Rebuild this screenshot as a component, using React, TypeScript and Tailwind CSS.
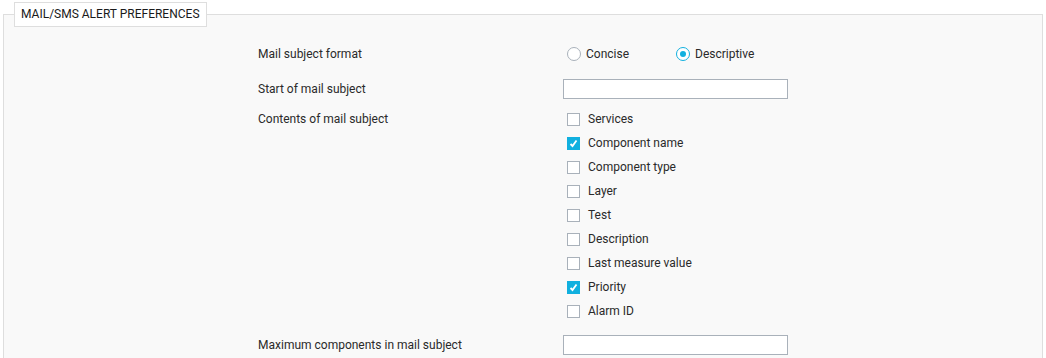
import React from "react";

const items = [
  { label: "Services", checked: false },
  { label: "Component name", checked: true },
  { label: "Component type", checked: false },
  { label: "Layer", checked: false },
  { label: "Test", checked: false },
  { label: "Description", checked: false },
  { label: "Last measure value", checked: false },
  { label: "Priority", checked: true },
  { label: "Alarm ID", checked: false },
];

function Radio({ on, label }: { on?: boolean; label: string }) {
  return (
    <label className="flex items-center gap-[5px]">
      <span
        className={
          "flex h-[14px] w-[14px] items-center justify-center rounded-full border bg-white " +
          (on ? "border-[#11b0df]" : "border-[#a9b1ba]")
        }
      >
        {on && <span className="h-[6px] w-[6px] rounded-full bg-[#11b0df]" />}
      </span>
      {label}
    </label>
  );
}

function Check({ on, label }: { on: boolean; label: string }) {
  return (
    <label className="flex h-[24px] items-center gap-[8px] pl-[4px]">
      {on ? (
        <span className="flex h-[13px] w-[13px] items-center justify-center bg-[#11b0df]">
          <svg width="9" height="9" viewBox="0 0 9 9">
            <path d="M1.5 5 L3.5 7 L7.5 1.5" fill="none" stroke="white" strokeWidth="1.8" />
          </svg>
        </span>
      ) : (
        <span className="h-[13px] w-[13px] border border-[#a9b1ba] bg-white" />
      )}
      {label}
    </label>
  );
}

export default function App() {
  return (
    <div className="bg-white px-[3px] pt-[2px] text-[12px] text-[#2a2a2a] [font-family:Roboto,'Liberation_Sans',sans-serif]">
      <fieldset className="border border-[#dedede] bg-[#f9f9f9] pb-[20px]">
        <legend className="ml-[10px] border border-[#dedede] bg-white px-[6px] py-[5px] leading-[13px] text-[#1a1a1a]">
          MAIL/SMS ALERT PREFERENCES
        </legend>
        <div className="mx-auto mt-[14px] grid w-[530px] grid-cols-[305px_225px]">
          <div className="flex h-[26px] items-center">Mail subject format</div>
          <div className="grid h-[26px] grid-cols-[109px_1fr] items-center pl-[4px]">
            <Radio label="Concise" />
            <Radio on label="Descriptive" />
          </div>

          <div className="flex h-[40px] items-center pt-[4px]">Start of mail subject</div>
          <div className="flex h-[40px] items-center pt-[4px]">
            <input className="h-[20px] w-full border border-[#a9b1ba] bg-white" />
          </div>

          <div className="flex h-[24px] items-center">Contents of mail subject</div>
          <div className="row-span-2">
            {items.map((it) => (
              <Check key={it.label} on={it.checked} label={it.label} />
            ))}
          </div>
          <div />

          <div className="mt-[10px] flex h-[24px] items-center">Maximum components in mail subject</div>
          <div className="mt-[10px] flex h-[24px] items-center">
            <input className="h-[20px] w-full border border-[#a9b1ba] bg-white" />
          </div>
        </div>
      </fieldset>
    </div>
  );
}
